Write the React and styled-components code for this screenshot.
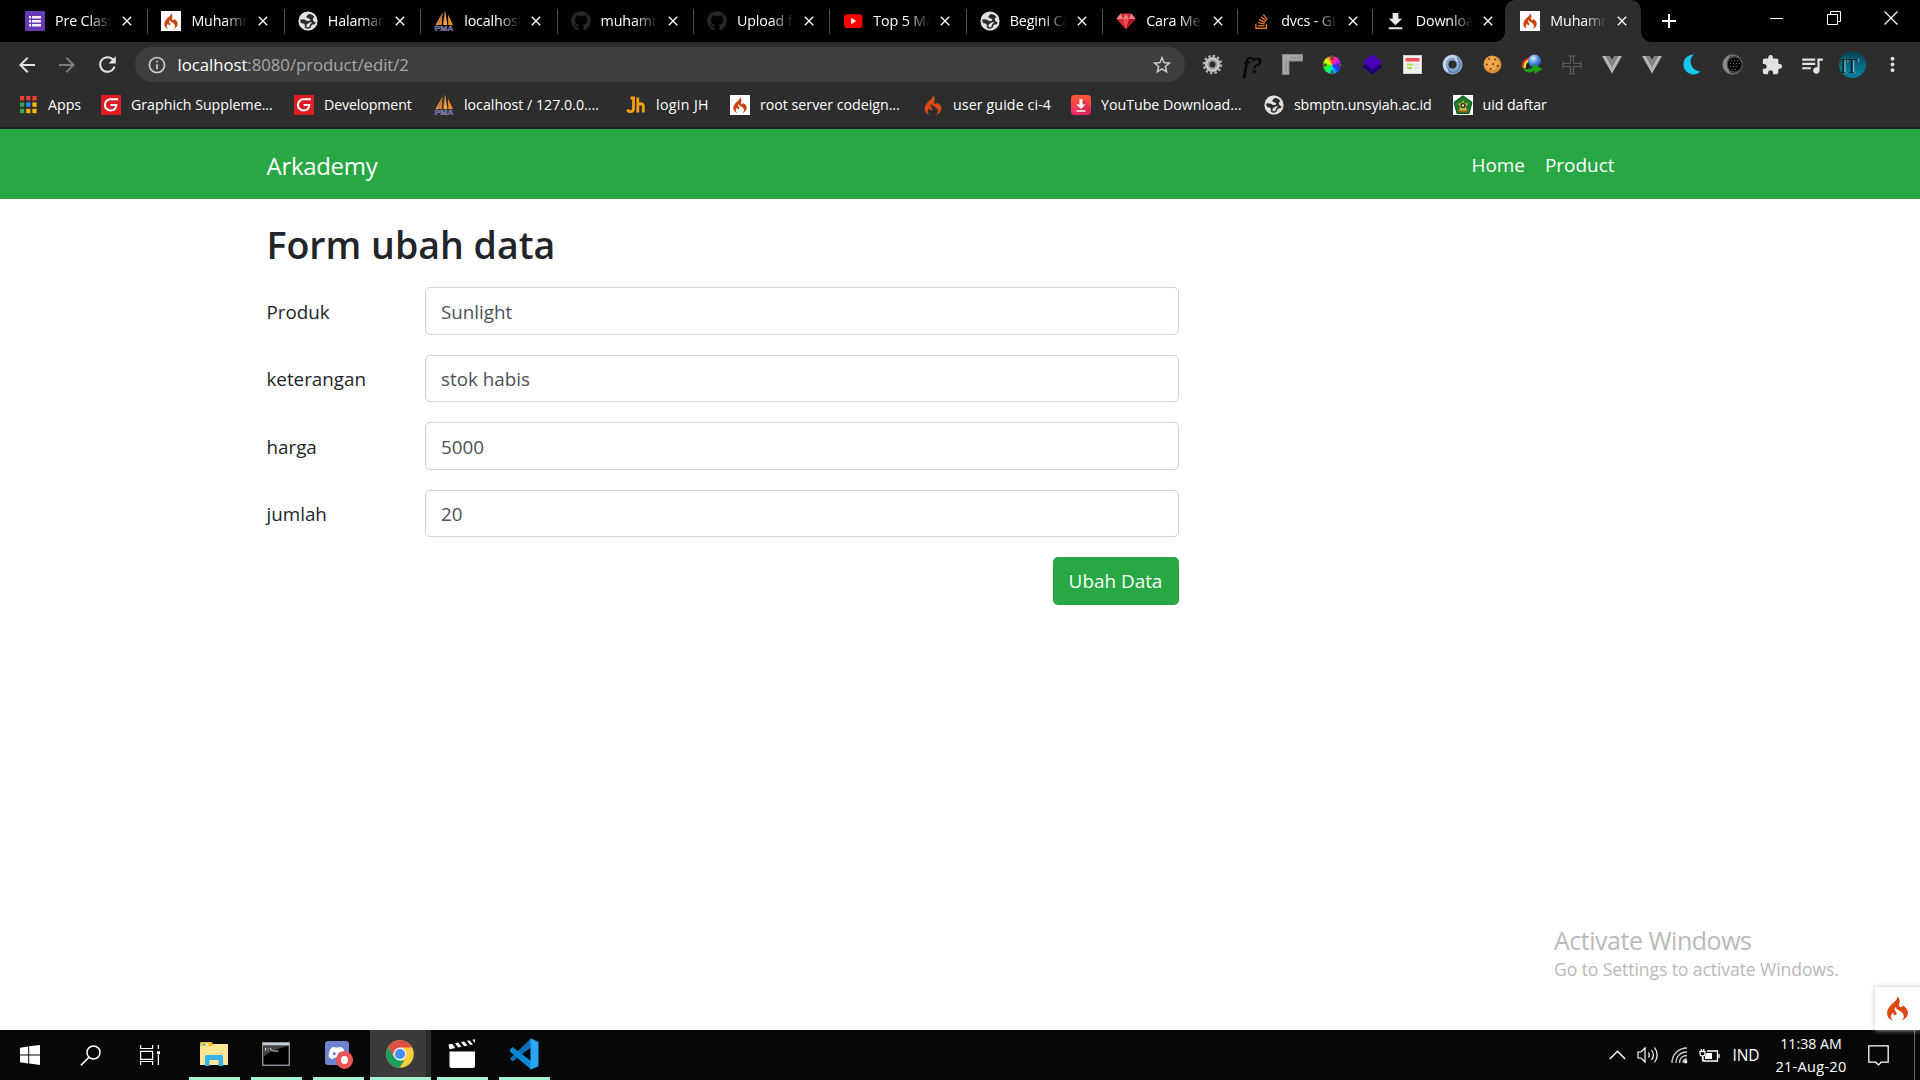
import React from "react";
import styled, { createGlobalStyle, css } from "styled-components";
import { MdArrowBack, MdArrowForward, MdRefresh, MdInfoOutline, MdStarBorder, MdExtension, MdQueueMusic, MdMoreVert, MdClose, MdAdd, MdDownload } from "react-icons/md";
import { FaGithub, FaStackOverflow, FaDiscord } from "react-icons/fa";
import { SiCodeigniter } from "react-icons/si";

const GlobalStyle = createGlobalStyle`
  *, *::before, *::after { box-sizing: border-box; }
  html, body { margin: 0; padding: 0; background: #fff; overflow: hidden; }
  body, input, button { font-family: "Open Sans", "Noto Sans", sans-serif; }
  svg { display: block; flex: none; }
`;

const Screen = styled.div`
  width: 1920px;
  height: 1080px;
  display: flex;
  flex-direction: column;
  overflow: hidden;
`;

/* ---------- browser chrome ---------- */

const TabStrip = styled.div`
  height: 42px;
  flex: none;
  display: flex;
  background: #000;
  padding-left: 11px;
`;

const Tab = styled.div`
  position: relative;
  width: ${(p) => p.$width}px;
  height: 42px;
  flex: none;
  display: flex;
  align-items: center;
  padding: 0 12px 0 14px;
  color: #fff;
  ${(p) =>
    !p.$active &&
    !p.$last &&
    css`
      &::after {
        content: "";
        position: absolute;
        right: -1px;
        top: 9px;
        width: 1px;
        height: 25px;
        background: #4b4b4b;
      }
    `}
  ${(p) =>
    p.$active &&
    css`
      background: #2d2d2d;
      border-radius: 10px 10px 0 0;
      margin-left: -1px;
      padding-left: 15px;
      &::before,
      &::after {
        content: "";
        position: absolute;
        bottom: 0;
        width: 10px;
        height: 10px;
      }
      &::before {
        left: -10px;
        background: radial-gradient(circle at 0 0, transparent 9.5px, #2d2d2d 10px);
      }
      &::after {
        right: -10px;
        background: radial-gradient(circle at 100% 0, transparent 9.5px, #2d2d2d 10px);
      }
    `}
`;

const Favicon = styled.span`
  width: 20px;
  height: 20px;
  flex: none;
  display: flex;
  align-items: center;
  justify-content: center;
  background: ${(p) => p.$bg || "transparent"};
`;

const TabTitle = styled.span`
  width: 57px;
  margin-left: 10px;
  flex: none;
  overflow: hidden;
  white-space: nowrap;
  font-size: 14.3px;
  line-height: 20px;
  letter-spacing: -0.15px;
  mask-image: linear-gradient(90deg, #000 34px, transparent 57px);
`;

const TabClose = styled.span`
  margin-left: 7px;
  display: flex;
`;

const NewTab = styled.span`
  width: 56px;
  display: flex;
  align-items: center;
  justify-content: center;
  color: #fff;
`;

const WindowControls = styled.div`
  margin-left: auto;
  margin-right: 1px;
  height: 36px;
  display: flex;
`;

const WindowButton = styled.span`
  width: 57px;
  display: flex;
  align-items: center;
  justify-content: center;
`;

const Toolbar = styled.div`
  height: 45px;
  flex: none;
  display: flex;
  align-items: center;
  background: #2d2d2d;
  padding: 0 7px;
`;

const ToolButton = styled.span`
  width: 40px;
  display: flex;
  justify-content: center;
  color: ${(p) => (p.$dim ? "#7d7d7d" : "#e2e2e2")};
`;

const Omnibox = styled.div`
  width: 1050px;
  height: 35px;
  margin-left: 8px;
  padding: 0 12px;
  border-radius: 18px;
  background: #3e3e3e;
  display: flex;
  align-items: center;
  color: #cfcfcf;
`;

const Url = styled.span`
  margin-left: 10.5px;
  flex: 1;
  font-size: 16.8px;
  letter-spacing: -0.05px;
  line-height: 24px;
  color: #a9a9a9;
`;

const UrlHost = styled.span`
  color: #fff;
`;

const Extensions = styled.div`
  margin-left: 7px;
  display: flex;
  align-items: center;
`;

const FontGuess = styled.span`
  font-family: "Liberation Serif", serif;
  font-style: italic;
  font-size: 24px;
  line-height: 22px;
  color: #050505;
  -webkit-text-stroke: 0.5px #050505;
`;

const ColorWheel = styled.span`
  width: 18px;
  height: 18px;
  border-radius: 50%;
  background: conic-gradient(#ff3040, #ff20c0 40deg, #8020ff 80deg, #1040ff 130deg, #00d0ff 170deg, #00ff90 210deg, #40ff00 260deg, #f5ff00 310deg, #ff3040);
  display: flex;
  align-items: center;
  justify-content: center;
`;

const Avatar = styled.span`
  width: 27px;
  height: 27px;
  border-radius: 50%;
  background: linear-gradient(#07404e, #00708a 60%, #017f99);
  color: #0b1c22;
  font: 20px/30px "Liberation Serif", serif;
  letter-spacing: -1px;
  padding-right: 7px;
  text-align: center;
  text-shadow: 1px 0 1px #d5dcdd;
`;

const BookmarkBar = styled.div`
  height: 42px;
  flex: none;
  display: flex;
  align-items: center;
  background: #2d2d2d;
  border-bottom: 2px solid #202020;
  padding: 0 0 4px 18px;
`;

const Bookmark = styled.span`
  width: ${(p) => p.$width}px;
  flex: none;
  display: flex;
  align-items: center;
  white-space: nowrap;
  font-size: 14.2px;
  line-height: 20px;
  letter-spacing: ${(p) => p.$spacing ?? 0}px;
  color: #fff;
`;

const BookmarkLabel = styled.span`
  margin-left: 10px;
`;

/* ---------- page ---------- */

const Navbar = styled.nav`
  height: 70px;
  flex: none;
  background: #28a745;
  color: #fff;
`;

const Container = styled.div`
  width: 1387px;
  margin: 0 auto;
  padding-right: 39px;
`;

const NavInner = styled(Container)`
  height: 70px;
  padding-top: 2px;
  display: flex;
  align-items: center;
`;

const Brand = styled.span`
  padding-top: 1px;
  font-size: 24px;
  letter-spacing: -0.3px;
  line-height: 36px;
`;

const NavLinks = styled.div`
  margin-left: auto;
  display: flex;
  gap: 20px;
`;

const NavLink = styled.span`
  font-size: 18.95px;
  line-height: 30px;
`;

const Page = styled.main`
  position: relative;
  flex: 1;
  background: #fff;
  color: #212529;
`;

const Title = styled.h2`
  margin: 0;
  padding-top: 21px;
  font-size: 37.5px;
  line-height: 50px;
  font-weight: 600;
`;

const Form = styled.form`
  width: 912px;
  padding-top: 17px;
  display: flex;
  flex-direction: column;
  gap: 20px;
`;

const FormRow = styled.div`
  display: flex;
  align-items: center;
  height: 47.5px;
`;

const Label = styled.label`
  width: 158.5px;
  padding-top: 2px;
  font-size: 18.8px;
  line-height: 30px;
`;

const Input = styled.input`
  flex: 1;
  min-width: 0;
  height: 47.5px;
  padding: 2px 15px 0;
  border: 1px solid #ced4da;
  border-radius: 5px;
  background: #fff;
  color: #495057;
  font-size: 18.8px;
  outline: none;
`;

const SubmitButton = styled.button`
  margin-left: auto;
  width: 126px;
  height: 47.5px;
  padding: 1px 0 0;
  border: 0;
  border-radius: 5px;
  background: #28a745;
  color: #fff;
  font-size: 18.9px;
`;

const Watermark = styled.div`
  position: absolute;
  left: 1554px;
  bottom: 49px;
  color: #b9b9b9;
  white-space: nowrap;
`;

const WatermarkTitle = styled.div`
  font-size: 25px;
  letter-spacing: -0.48px;
  line-height: 34px;
`;

const WatermarkText = styled.div`
  font-size: 17.6px;
  letter-spacing: -0.1px;
  line-height: 24px;
`;

const DebugBadge = styled.div`
  position: absolute;
  right: 0;
  bottom: 0;
  width: 45px;
  height: 43px;
  display: flex;
  align-items: center;
  justify-content: center;
  background: #fff;
  box-shadow: 0 0 5px #c4c4c4;
`;

/* ---------- taskbar ---------- */

const Taskbar = styled.footer`
  height: 50px;
  flex: none;
  display: flex;
  background: #080808;
`;

const SystemButton = styled.span`
  width: 60px;
  display: flex;
  align-items: center;
  justify-content: center;
`;

const AppButton = styled.span`
  width: ${(p) => p.$width || 51}px;
  margin-left: ${(p) => p.$gap ?? 11}px;
  flex: none;
  display: flex;
  align-items: center;
  justify-content: center;
  padding-right: ${(p) => p.$shift ?? 1.5}px;
  border-bottom: 3px solid #a5f2d0;
  background: ${(p) => (p.$active ? "linear-gradient(90deg, #3b3b3b 56px, #1f1f1f 56px, #2c2c2c 58px)" : "transparent")};
`;

const Tray = styled.div`
  margin-left: auto;
  display: flex;
  align-items: center;
  color: #fff;
`;

const TrayItem = styled.span`
  width: ${(p) => p.$width}px;
  display: flex;
  justify-content: center;
  font-size: 15.5px;
  line-height: 22px;
`;

const Clock = styled.div`
  width: 84px;
  font-size: 14.2px;
  line-height: 23.5px;
  text-align: center;
  white-space: nowrap;
`;

const ClockDate = styled.div`
  font-size: 14.5px;
  letter-spacing: 0.3px;
`;

const ShowDesktop = styled.span`
  width: 6px;
  height: 50px;
  border-left: 1px solid #6a6a6a;
`;

/* ---------- drawings ---------- */

const GlobeIcon = () => (
  <svg width="20" height="20" viewBox="0 0 20 20">
    <circle cx="10" cy="10" r="9.200" fill="#e0e2e2" />
    <path d="M10.500 3.200C8 5 8 6 8.800 6.800c1.200 1 3 .2 3.400 1.600.4 1.500-1.500 1.700-2.700 1.600-1.500-.2-1.800-1.400-3.500-1.500L2 8.200C1.500 11 3 12.300 5 12.600c1.500.3 2.200 1.400 1.800 2.600-.3 1 .5 2 1.700 2.700 3 .5 4.500-1 4.700-2.600.2-1.500 1.500-1.700 2.500-1.800 1.200-.2 2.200-1 2.600-2.500-1.800.5-2.500-.3-3.300-1.700-.8-1.500.5-2.500 1.500-3.300C15 4 12.500 2.800 10.500 3.200z" fill="#2c2d2d" />
    <path d="M9 13.200c1.500-1 2.800-2 5-2.200-.2 1.500-1.800 1.500-2 3-.2 1.600-1 2.400-2.500 2.300-1.200-.3-1.500-2-.5-3.100z" fill="#e0e2e2" />
    <circle cx="10" cy="10" r="8.700" fill="none" stroke="#e0e2e2" strokeWidth="1.800" />
  </svg>
);

const FormsIcon = () => (
  <svg width="20" height="20" viewBox="0 0 20 20">
    <rect width="20" height="20" rx="1" fill="#673ab7" />
    <path d="M4 5h2v2.400H4zM7 5h9v2.400H7zM4 9h2v2.400H4zM7 9h9v2.400H7zM4 13h2v2.400H4zM7 13h9v2.400H7z" fill="#f4f0fa" />
  </svg>
);

const PmaIcon = () => (
  <svg width="20" height="20" viewBox="0 0 20 20">
    <path d="M8.500 1.500L1.500 14h6z" fill="#e8943a" />
    <path d="M11.200 0L9 14h4.400z" fill="#f6a23c" />
    <path d="M14 3.500l.3 10.500H19z" fill="#ef8d20" />
    <path d="M11 0L9.200 14M8.300 3L4.500 14" stroke="#8b6238" strokeWidth=".8" />
    <text x="10" y="19.600" textAnchor="middle" textLength="19" lengthAdjust="spacingAndGlyphs" fontFamily="Liberation Sans" fontWeight="700" fontSize="8" fill="#3c3f75" stroke="#a7a8cc" strokeWidth=".4">PMA</text>
  </svg>
);

const YouTubeIcon = () => (
  <svg width="20" height="20" viewBox="0 0 20 20">
    <rect x="1" y="3.200" width="18.400" height="13.800" rx="3" fill="#f00" />
    <path d="M8.200 7l5 3.100-5 3.100z" fill="#fff" />
  </svg>
);

const RubyIcon = () => (
  <svg width="20" height="20" viewBox="0 0 20 20">
    <path d="M4.500 2.500h11L19.500 8 10 18.500.5 8z" fill="#d22f36" />
    <path d="M4.500 2.500L7 8l3-5.500L13 8l2.500-5.500L19.500 8H.5z" fill="#f07f80" />
    <path d="M7 8h6l-3 10.500z" fill="#ea4c54" />
    <path d="M13 8h6.500L10 18.500z" fill="#b3141f" />
  </svg>
);

const AppsIcon = () => (
  <svg width="20" height="20" viewBox="0 0 20 20">
    {["#ea4335", "#ea4335", "#ea4335", "#34a853", "#2b8cff", "#fbbc05", "#34a853", "#fbaf05", "#fbbc05"].map((c, i) => (
      <rect key={i} x={2 + (i % 3) * 6.2} y={1 + Math.floor(i / 3) * 6.4} width="4.200" height="4.400" fill={c} />
    ))}
  </svg>
);

const GIcon = () => (
  <svg width="20" height="20" viewBox="0 0 20 20">
    <rect width="20" height="20" fill="#e01b22" />
    <path d="M17 4.300H9.500a5.500 5.500 0 1 0 0 11.200c3.600 0 5.500-2.300 5.800-5.500H9.500" fill="none" stroke="#fff" strokeWidth="2.100" />
  </svg>
);

const JhIcon = () => (
  <svg width="20" height="20" viewBox="0 0 20 20">
    <path d="M7.500 2v11.500c0 4-5 4-6 1M4.500 3h4.500M11.800 2.500v15M11.800 10.500c1-2.500 5.500-2.500 5.500 1v6" fill="none" stroke="#f9a00c" strokeWidth="2.800" />
  </svg>
);

const YtDownloadIcon = () => (
  <svg width="20" height="20" viewBox="0 0 20 20">
    <defs>
      <linearGradient id="ytd" x1="0" y1="0" x2="0" y2="1">
        <stop offset="0" stopColor="#ff5a36" />
        <stop offset="1" stopColor="#f4246b" />
      </linearGradient>
    </defs>
    <rect width="20" height="20" rx="3.500" fill="url(#ytd)" />
    <path d="M12 4l8 8v5q0 3-3 3h-5l-6-4z" fill="#a51c40" opacity=".35" />
    <path d="M8.500 4h3v5.500h3L10 14 5.500 9.500h3z" fill="#fff" />
    <path d="M5.500 15.200h9v1.500h-9z" fill="#fff" />
  </svg>
);

const EmblemIcon = () => (
  <svg width="20" height="20" viewBox="0 0 20 20">
    <rect width="20" height="20" fill="#fff" />
    <path d="M10 .8l9 6.500-3 11.200H4L1 7.300z" fill="#1d7a26" stroke="#0a4c10" />
    <path d="M10 5l1.500 3 4 .5-2.500 3 1 4.500h-8l1-4.500-2.500-3 4-.5z" fill="#cfae3c" />
    <circle cx="10" cy="10.500" r="2.600" fill="#222" />
    <circle cx="10" cy="10.500" r="1.200" fill="#ddd" />
    <path d="M4.500 16.500h11" stroke="#8b5b1c" strokeWidth="1.500" />
  </svg>
);

const GearIcon = () => (
  <svg width="21" height="21" viewBox="0 0 21 21">
    <circle cx="10.500" cy="10.500" r="8.600" fill="none" stroke="#b4b4b4" strokeWidth="2.400" strokeDasharray="2.400 2.100" />
    <circle cx="10.500" cy="10.500" r="5.400" fill="none" stroke="#c6c6c6" strokeWidth="4.400" />
    <circle cx="10.500" cy="10.500" r="4.400" fill="none" stroke="#8b8b8b" strokeWidth="1" />
  </svg>
);

const RulerIcon = () => (
  <svg width="21" height="21" viewBox="0 0 21 21">
    <path d="M.5.500h20V7H7v13.500H.5z" fill="#a6a6a6" stroke="#878787" />
    <path d="M4 8v10M8 4h11" stroke="#7e7e7e" strokeWidth="2" strokeDasharray="1 1.500" />
  </svg>
);

const WheelMarks = () => (
  <svg width="20" height="20" viewBox="0 0 20 20" overflow="visible">
    <path d="M10-.5v5M10 15.500v5M-.5 10h5M15.500 10h5" stroke="#111" strokeWidth="2.400" />
    <path d="M10 0v4M10 16v4M0 10h4M16 10h4" stroke="#aaa" strokeWidth=".9" />
  </svg>
);

const LayersIcon = () => (
  <svg width="21" height="21" viewBox="0 0 21 21">
    <path d="M.5 12.500L10.500 6l10 6.500-10 8z" fill="#1e0072" />
    <path d="M.5 8L10.500.5l10 7.500-10 7.500z" fill="#4b00b5" />
  </svg>
);

const PageIcon = () => (
  <svg width="19" height="19" viewBox="0 0 19 19">
    <rect x=".5" y=".5" width="18" height="18" fill="#f2f2f2" stroke="#cfcfcf" />
    <path d="M2.500 3h14v3.500h-14z" fill="#ef5357" />
    <path d="M4 9.500h6M4 13h5" stroke="#a4df4a" strokeWidth="2" />
    <path d="M11 9.500h5M11 13h5" stroke="#e2e2e2" strokeWidth="2" />
  </svg>
);

const RingIcon = () => (
  <svg width="21" height="21" viewBox="0 0 21 21">
    <circle cx="10.500" cy="10.500" r="7" fill="none" stroke="#86a5ca" strokeWidth="6" />
    <path d="M6 17.500A8.300 8.300 0 0 1 9 2.500c4-1 6.500 2.500 6 5" fill="none" stroke="#c4d9ef" strokeWidth="2.600" />
    <path d="M15 4a8.300 8.300 0 0 1-3 14.500c-3.500.5-6-2-6-5" fill="none" stroke="#5d82b2" strokeWidth="1.400" />
  </svg>
);

const CookieIcon = () => (
  <svg width="19" height="19" viewBox="0 0 19 19">
    <circle cx="9.500" cy="9.500" r="9" fill="#dd8c36" />
    <circle cx="8.500" cy="8.300" r="7.200" fill="#efa850" />
    {[[6, 4], [12, 4.500], [4, 9.500], [10, 9], [14.500, 11], [7.500, 14]].map(([x, y]) => (
      <circle key={`${x}-${y}`} cx={x} cy={y} r="1.100" fill="#7d4415" />
    ))}
  </svg>
);

const IdmIcon = () => (
  <svg width="22" height="21" viewBox="0 0 22 21">
    <defs>
      <radialGradient id="idm" cx=".4" cy=".3" r=".8">
        <stop offset="0" stopColor="#dceeff" />
        <stop offset=".5" stopColor="#4a86dc" />
        <stop offset="1" stopColor="#17459c" />
      </radialGradient>
    </defs>
    <path d="M11 4C4 4 .5 9 2 14" fill="none" stroke="#d9281c" strokeWidth="2" />
    <path d="M11 6C5 6 3 10 4 14" fill="none" stroke="#f6d51d" strokeWidth="2.600" />
    <path d="M11 8.500c-4 0-5 3-4.500 6" fill="none" stroke="#1c1c1c" strokeWidth="2" />
    <circle cx="13.500" cy="7" r="6.500" fill="url(#idm)" />
    <path d="M2 12.500c2 4 7 3 10 .5V10l9.500 5-8 5v-3C8 20 2 18 2 12.500z" fill="#1e9e12" />
  </svg>
);

const CrossIcon = () => (
  <svg width="20" height="20" viewBox="0 0 20 20">
    <path d="M8.500 8.500V1.500M11.500 8.500V1.500M8.500 11.500v7M11.500 11.500v7M8.500 8.500h-7M8.500 11.500h-7M11.500 8.500h7M11.500 11.500h7M6.500 1h7M6.500 19h7M1 6.500v7M19 6.500v7" stroke="#5c5c5c" strokeWidth="1.200" fill="none" />
  </svg>
);

const VueIcon = () => (
  <svg width="20" height="18" viewBox="0 0 20 18">
    <path d="M0 0h4l6 10.500L16 0h4L10 17.500z" fill="#b4b4b4" />
    <path d="M4 0h3.800L10 3.800 12.200 0H16l-6 10.500z" fill="#848484" />
  </svg>
);

const MoonIcon = () => (
  <svg width="18" height="21" viewBox="0 0 18 21">
    <path d="M11 .5C5 5 7 16.500 17.500 17.500A10 10 0 1 1 11 .5z" fill="#14c8ef" />
  </svg>
);

const EclipseIcon = () => (
  <svg width="21" height="21" viewBox="0 0 21 21">
    <circle cx="10.500" cy="10.500" r="9.700" fill="#4a4a4a" stroke="#777" />
    <path d="M10.500 1a9.500 9.500 0 1 0 0 19C3 17 3 4 10.500 1z" fill="#8b8b8b" />
    <circle cx="12.700" cy="10.500" r="7" fill="#060606" />
    <path d="M9 6.500h7M8 9.500h10M8 12.500h9M10 15.500h5" stroke="#8a8a8a" strokeWidth=".8" strokeDasharray="1 2" />
  </svg>
);

const WindowsIcon = () => (
  <svg width="20" height="20" viewBox="0 0 20 20">
    <path d="M0 2.700l8.200-1.200v8H0zM9.200 1.300L20 0v9.500H9.200zM0 10.500h8.200v8L0 17.300zM9.200 10.500H20V20L9.200 18.600z" fill="#fff" />
  </svg>
);

const SearchIcon = () => (
  <svg width="21" height="21" viewBox="0 0 21 21" fill="none" stroke="#fff" strokeWidth="1.500">
    <circle cx="13.500" cy="7.500" r="6.500" />
    <path d="M9 12.200L.8 20.400" />
  </svg>
);

const TaskViewIcon = () => (
  <svg width="20" height="20" viewBox="0 0 20 20" fill="none" stroke="#fff" strokeWidth="1.200">
    <path d="M.6 0v3.500h12V0M.6 20v-3.500h12V20M.6 6.300h12v8H.6zM18.400 0v4M18.400 10v10" />
    <path d="M17 6.300h3v3h-3z" fill="#fff" stroke="none" />
  </svg>
);

const ExplorerIcon = () => (
  <svg width="28" height="24" viewBox="0 0 28 24">
    <path d="M0 1.500C0 .6.500 0 1.500 0h10l1.500 2v3H0z" fill="#f8bf26" />
    <path d="M0 4h12l1.500-2H28v21H0z" fill="#ffe694" />
    <path d="M2.500 1.700h6v1.500h-6z" fill="#fff" />
    <path d="M2.500 1.700h3v1.500h-3z" fill="#3ba3e0" />
    <path d="M5 24V14.500c0-1 .500-1.500 1.500-1.500h15c1 0 1.500.500 1.500 1.500V24h-4.500v-6h-9v6z" fill="#36b1ea" />
  </svg>
);

const TerminalIcon = () => (
  <svg width="28" height="24" viewBox="0 0 28 24">
    <rect x=".7" y=".7" width="26.600" height="22.600" fill="#000" stroke="#8d939a" strokeWidth="1.400" />
    <path d="M1 1h26v2.500H1z" fill="#c5ced6" />
    <path d="M1.400 4h25c-9 2-19 5-25 11z" fill="#444" />
    <path d="M3.500 6v2.500M6 6.200v.8M6 8v.8M8 5.800l2 3M10.500 9h6" stroke="#ddd" strokeWidth="1" />
  </svg>
);

const DiscordSquare = styled.span`
  position: relative;
  width: 28px;
  height: 30px;
`;

const DiscordTile = styled.span`
  width: 24px;
  height: 24px;
  margin-top: 2px;
  display: flex;
  align-items: center;
  justify-content: center;
  border-radius: 3px;
  background: #6d83cc;
  color: #fff;
`;

const DiscordBadge = styled.span`
  position: absolute;
  right: 0;
  bottom: 0;
  width: 17px;
  height: 18px;
  border-radius: 50%;
  border: 5px solid #ec5458;
  background: #fff;
`;

const ChromeIcon = () => (
  <svg width="28" height="28" viewBox="0 0 28 28">
    <circle cx="14" cy="14" r="13.800" fill="#ffcd40" />
    <path d="M14 7.500h12.200A13.800 13.800 0 0 0 2 7.200l3.500 8z" fill="#dd5144" />
    <path d="M2 7.200l6.400 10.100L14 20.400h4.500L13.500 27.800A13.800 13.800 0 0 1 2 7.200z" fill="#1a9e5f" />
    <circle cx="14" cy="14" r="6.500" fill="#f1f1f1" />
    <circle cx="14" cy="14" r="5.100" fill="#4a8cf6" />
  </svg>
);

const ClapperIcon = () => (
  <svg width="28" height="30" viewBox="0 0 28 30">
    <path d="M1.500 12.500h25.500V27q0 2-2 2h-21.500q-2 0-2-2z" fill="#fff" />
    <path d="M.5 5.500L27 .3v4.800L1.500 10.300z" fill="#fff" />
    <path d="M5 3.500l4.500 6.500M11 2.500l4.500 6M17 1.500l4.500 5.500M22.500.5l4 5" stroke="#080808" strokeWidth="2.600" />
  </svg>
);

const VsCodeIcon = () => (
  <svg width="30" height="32" viewBox="0 0 30 32">
    <path d="M1 20.500L22 .5v9L3.500 23.500z" fill="#0a6fb8" />
    <path d="M1 11.500L3.500 9 22 23v8.500L.8 13.500z" fill="#0787d4" />
    <path d="M21.500.3L29.500 4v24.300l-8 3.500z" fill="#2aa4f4" />
  </svg>
);

const FireIcon = ({ size, color = "#dd4814" }) => <SiCodeigniter size={size} color={color} />;

const SpeakerIcon = () => (
  <svg width="22" height="20" viewBox="0 0 22 20" fill="none" stroke="#fff" strokeWidth="1.200">
    <path d="M1 7h3l4-4v14l-4-4H1z" />
    <path d="M11.500 7.500c1 1.500 1 3.500 0 5M14.500 5c2.300 3 2.300 7 0 10M17.500 2.500c3.500 4.500 3.500 10.500 0 15" />
  </svg>
);

const WifiIcon = () => (
  <svg width="17" height="17" viewBox="0 0 17 17" fill="none" stroke="#cfcfcf" strokeWidth="1.300">
    <path d="M1 16C1 7.500 7.500 1 16 1M5 16C5 9.500 9.500 5 16 5M8.500 16c0-4.500 3-7.500 7.500-7.500" />
    <path d="M12 16c0-2.500 1.500-4 4-4" />
    <circle cx="14.700" cy="14.700" r="1.700" fill="#fff" stroke="none" />
  </svg>
);

const BatteryIcon = () => (
  <svg width="21" height="15" viewBox="0 0 21 15" fill="none" stroke="#fff" strokeWidth="1.300">
    <path d="M8 3h10.500v10H4V9" />
    <path d="M20 6v4" />
    <path d="M1 3.500h5V6q0 2-2.500 2T1 6zM2.300 3.500V1M4.700 3.500V1M3.500 8v4.500" />
    <path d="M7.500 5H13v6H6V8.500z" fill="#fff" stroke="none" />
  </svg>
);

const NoticeIcon = () => (
  <svg width="21" height="21" viewBox="0 0 21 21" fill="none" stroke="#fff" strokeWidth="1.300">
    <path d="M.8.800h19.400v16.400h-7l-2.700 2.700-2.700-2.700h-7z" />
  </svg>
);

const CiFavicon = () => (
  <Favicon $bg="#fff">
    <FireIcon size={16} color="#c9430f" />
  </Favicon>
);

const TABS = [
  { title: "Pre Class", icon: <FormsIcon /> },
  { title: "Muhamm", icon: <CiFavicon /> },
  { title: "Halaman", icon: <GlobeIcon /> },
  { title: "localhost", icon: <PmaIcon /> },
  { title: "muhamm", icon: <FaGithub size={20} color="#24292e" /> },
  { title: "Upload f", icon: <FaGithub size={20} color="#24292e" /> },
  { title: "Top 5 Ma", icon: <YouTubeIcon /> },
  { title: "Begini Ca", icon: <GlobeIcon /> },
  { title: "Cara Me", icon: <RubyIcon />, width: 135 },
  { title: "dvcs - Gi", icon: <FaStackOverflow size={17} color="#e07a2c" />, width: 134.6 },
  { title: "Downloa", icon: <MdDownload size={23} color="#e8e8e8" />, width: 134.6 },
  { title: "Muhamm", icon: <CiFavicon />, width: 136, active: true },
];

const BOOKMARKS = [
  { label: "Apps", width: 83, icon: <AppsIcon /> },
  { label: "Graphich Suppleme...", width: 193, icon: <GIcon /> },
  { label: "Development", width: 140, spacing: -0.12, icon: <GIcon /> },
  { label: "localhost / 127.0.0....", width: 192, icon: <PmaIcon /> },
  { label: "login JH", width: 104, spacing: 0.35, icon: <JhIcon /> },
  { label: "root server codeign...", width: 193, icon: <CiFavicon /> },
  { label: "user guide ci-4", width: 148, spacing: 0.12, icon: <FireIcon size={20} /> },
  { label: "YouTube Download...", width: 193, icon: <YtDownloadIcon /> },
  { label: "sbmptn.unsyiah.ac.id", width: 188.5, spacing: -0.15, icon: <GlobeIcon /> },
  { label: "uid daftar", width: 120, spacing: -0.05, icon: <EmblemIcon /> },
];

const EXTENSIONS = [
  <GearIcon />,
  <FontGuess>f?</FontGuess>,
  <RulerIcon />,
  <ColorWheel><WheelMarks /></ColorWheel>,
  <LayersIcon />,
  <PageIcon />,
  <RingIcon />,
  <CookieIcon />,
  <IdmIcon />,
  <CrossIcon />,
  <VueIcon />,
  <VueIcon />,
  <MoonIcon />,
  <EclipseIcon />,
  <MdExtension size={22} />,
  <MdQueueMusic size={26} />,
  <Avatar>IT</Avatar>,
  <MdMoreVert size={23} />,
];

const FIELDS = [
  { name: "Produk", value: "Sunlight" },
  { name: "keterangan", value: "stok habis" },
  { name: "harga", value: "5000" },
  { name: "jumlah", value: "20" },
];

export default function App() {
  return (
    <Screen>
      <GlobalStyle />
      <TabStrip>
        {TABS.map((t, i) => (
          <Tab key={i} $width={t.width || 136.4} $active={t.active} $last={i === TABS.length - 2}>
            <Favicon>{t.icon}</Favicon>
            <TabTitle>{t.title}</TabTitle>
            <TabClose><MdClose size={16} /></TabClose>
          </Tab>
        ))}
        <NewTab><MdAdd size={24} /></NewTab>
        <WindowControls>
          <WindowButton>
            <svg width="13" height="13"><path d="M0 6.500h13" stroke="#fff" /></svg>
          </WindowButton>
          <WindowButton>
            <svg width="14" height="14" fill="none" stroke="#fff"><path d="M.5 3.500h10v10H.5zM3.500 3.500v-3h10v10h-3" /></svg>
          </WindowButton>
          <WindowButton>
            <svg width="14" height="14" stroke="#fff" strokeWidth="1.200"><path d="M.5.500l13 13M13.500.500l-13 13" /></svg>
          </WindowButton>
        </WindowControls>
      </TabStrip>
      <Toolbar>
        <ToolButton><MdArrowBack size={24} /></ToolButton>
        <ToolButton $dim><MdArrowForward size={24} /></ToolButton>
        <ToolButton><MdRefresh size={25} /></ToolButton>
        <Omnibox>
          <MdInfoOutline size={20} />
          <Url><UrlHost>localhost</UrlHost>:8080/product/edit/2</Url>
          <MdStarBorder size={22} />
        </Omnibox>
        <Extensions>
          {EXTENSIONS.map((icon, i) => (
            <ToolButton key={i}>{icon}</ToolButton>
          ))}
        </Extensions>
      </Toolbar>
      <BookmarkBar>
        {BOOKMARKS.map((b) => (
          <Bookmark key={b.label} $width={b.width} $spacing={b.spacing}>
            <Favicon>{b.icon}</Favicon>
            <BookmarkLabel>{b.label}</BookmarkLabel>
          </Bookmark>
        ))}
      </BookmarkBar>
      <Navbar>
        <NavInner>
          <Brand>Arkademy</Brand>
          <NavLinks>
            <NavLink>Home</NavLink>
            <NavLink>Product</NavLink>
          </NavLinks>
        </NavInner>
      </Navbar>
      <Page>
        <Container>
          <Title>Form ubah data</Title>
          <Form>
            {FIELDS.map((f) => (
              <FormRow key={f.name}>
                <Label htmlFor={f.name}>{f.name}</Label>
                <Input id={f.name} defaultValue={f.value} />
              </FormRow>
            ))}
            <FormRow>
              <SubmitButton type="button">Ubah Data</SubmitButton>
            </FormRow>
          </Form>
        </Container>
        <Watermark>
          <WatermarkTitle>Activate Windows</WatermarkTitle>
          <WatermarkText>Go to Settings to activate Windows.</WatermarkText>
        </Watermark>
        <DebugBadge><FireIcon size={25} /></DebugBadge>
      </Page>
      <Taskbar>
        <SystemButton><WindowsIcon /></SystemButton>
        <SystemButton><SearchIcon /></SystemButton>
        <SystemButton><TaskViewIcon /></SystemButton>
        <AppButton $gap={9}><ExplorerIcon /></AppButton>
        <AppButton><TerminalIcon /></AppButton>
        <AppButton $shift={0}>
          <DiscordSquare>
            <DiscordTile><FaDiscord size={18} /></DiscordTile>
            <DiscordBadge />
          </DiscordSquare>
        </AppButton>
        <AppButton $gap={6} $width={61} $active $shift={2}><ChromeIcon /></AppButton>
        <AppButton $gap={6}><ClapperIcon /></AppButton>
        <AppButton><VsCodeIcon /></AppButton>
        <Tray>
          <TrayItem $width={30}>
            <svg width="17" height="10" fill="none" stroke="#fff" strokeWidth="1.400"><path d="M.8 9L8.500 1.200 16.200 9" /></svg>
          </TrayItem>
          <TrayItem $width={31}><SpeakerIcon /></TrayItem>
          <TrayItem $width={32}><WifiIcon /></TrayItem>
          <TrayItem $width={28}><BatteryIcon /></TrayItem>
          <TrayItem $width={46}>IND</TrayItem>
          <Clock>
            <div>11:38 AM</div>
            <ClockDate>21-Aug-20</ClockDate>
          </Clock>
          <TrayItem $width={50}><NoticeIcon /></TrayItem>
          <TrayItem $width={11} />
          <ShowDesktop />
        </Tray>
      </Taskbar>
    </Screen>
  );
}
